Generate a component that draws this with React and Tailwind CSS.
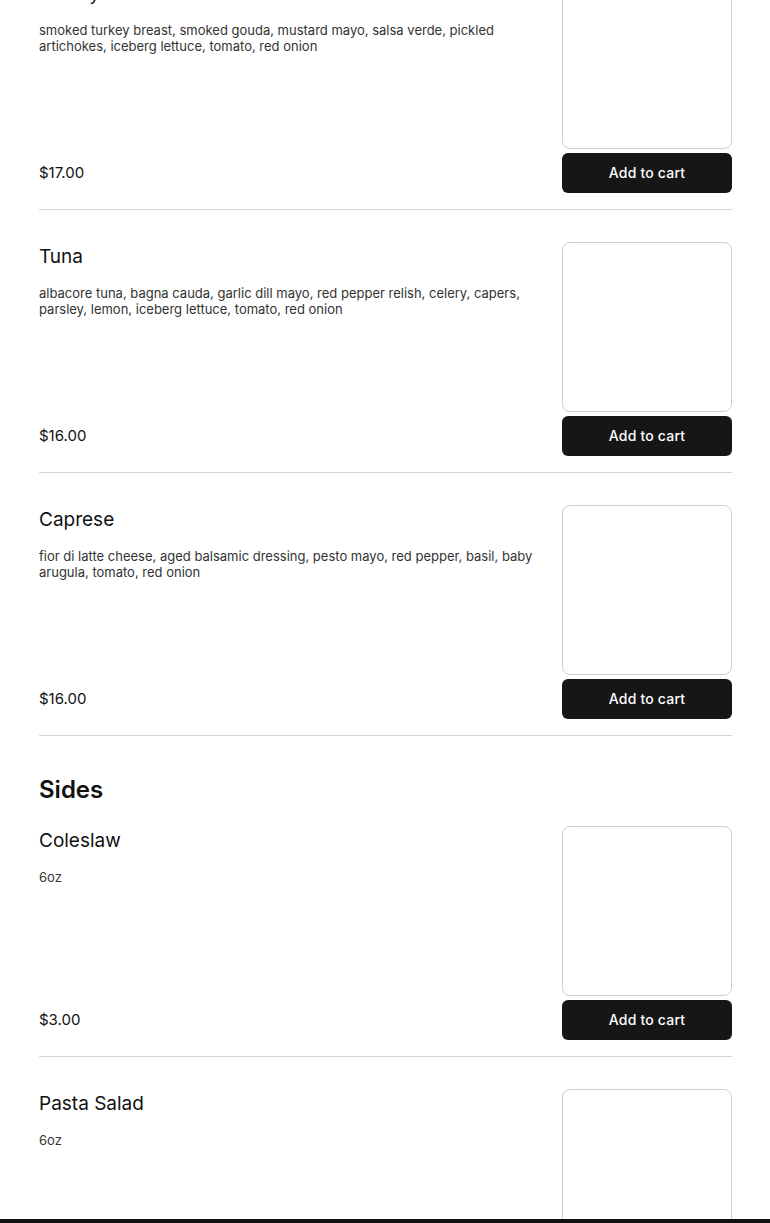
const sandwiches = [
  {
    name: "Turkey",
    desc: "smoked turkey breast, smoked gouda, mustard mayo, salsa verde, pickled artichokes, iceberg lettuce, tomato, red onion",
    price: "$17.00",
  },
  {
    name: "Tuna",
    desc: "albacore tuna, bagna cauda, garlic dill mayo, red pepper relish, celery, capers, parsley, lemon, iceberg lettuce, tomato, red onion",
    price: "$16.00",
  },
  {
    name: "Caprese",
    desc: "fior di latte cheese, aged balsamic dressing, pesto mayo, red pepper, basil, baby arugula, tomato, red onion",
    price: "$16.00",
  },
];

const sides = [
  { name: "Coleslaw", desc: "6oz", price: "$3.00" },
  { name: "Pasta Salad", desc: "6oz", price: "$3.00" },
];

function MenuItem({ item, first }) {
  return (
    <div
      className={`flex gap-5 border-b border-[#d6d6d6] pb-4 ${first ? "pt-0" : "pt-8"}`}
    >
      <div className="flex min-w-0 flex-1 flex-col justify-between">
        <div className="pt-px">
          <h3 className="text-[19px] leading-7 text-[#111]">{item.name}</h3>
          <p className="mt-[14px] text-[13px] leading-4 text-[#333]">{item.desc}</p>
        </div>
        <div className="flex h-10 items-center text-[15px] text-[#111]">{item.price}</div>
      </div>
      <div className="flex w-[170px] shrink-0 flex-col gap-1">
        <div className="h-[170px] rounded-lg border border-[#cfcfcf] bg-white" />
        <button className="h-10 rounded-md bg-[#161616] text-sm font-medium tracking-[0.2px] text-white">
          Add to cart
        </button>
      </div>
    </div>
  );
}

export default function App() {
  return (
    <div className="h-screen overflow-hidden bg-white font-['Inter',sans-serif]">
      <div className="-mt-[53px] ml-[39px] mr-[38px]">
        <section>
          {sandwiches.map((item) => (
            <MenuItem key={item.name} item={item} />
          ))}
        </section>

        <section className="pt-[38px]">
          <h2 className="mb-5 text-2xl leading-8 font-semibold text-[#111]">Sides</h2>
          {sides.map((item, i) => (
            <MenuItem key={item.name} item={item} first={i === 0} />
          ))}
        </section>
      </div>

      <div className="fixed inset-x-0 bottom-0 h-1 bg-[#111]" />
    </div>
  );
}
